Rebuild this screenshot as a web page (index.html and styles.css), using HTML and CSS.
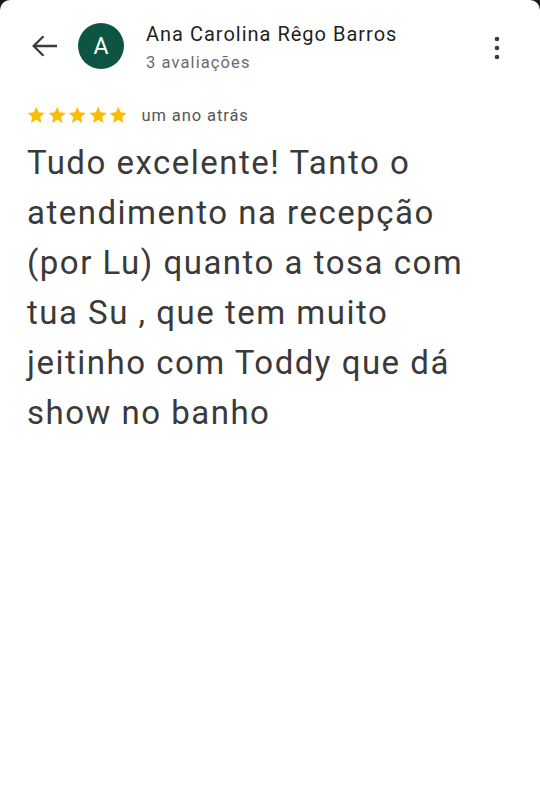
FILE: index.html
```html
<!DOCTYPE html>
<html lang="pt">
<head>
<meta charset="utf-8">
<link rel="stylesheet" href="styles.css">
</head>
<body>
<div class="screen">
  <header class="header">
    <svg class="back" viewBox="0 0 26 22" width="26" height="22"><path d="M1.5 11H25M11.5 1.2L1.6 11l9.9 9.8" fill="none" stroke="#3c3c3c" stroke-width="2.3"/></svg>
    <div class="avatar">A</div>
    <div class="who">
      <div class="name">Ana Carolina Rêgo Barros</div>
      <div class="count">3 avaliações</div>
    </div>
    <svg class="more" viewBox="0 0 24 24" width="24" height="24"><circle cx="12" cy="3" r="2.3" fill="#3c3c3c"/><circle cx="12" cy="12" r="2.3" fill="#3c3c3c"/><circle cx="12" cy="21" r="2.3" fill="#3c3c3c"/></svg>
  </header>
  <div class="meta">
    <div class="stars">
      <svg viewBox="0 0 24 24"><path d="M12 17.27L18.18 21l-1.64-7.03L22 9.24l-7.19-.61L12 2 9.19 8.63 2 9.24l5.46 4.73L5.82 21z" fill="#fbbc04"/></svg>
      <svg viewBox="0 0 24 24"><path d="M12 17.27L18.18 21l-1.64-7.03L22 9.24l-7.19-.61L12 2 9.19 8.63 2 9.24l5.46 4.73L5.82 21z" fill="#fbbc04"/></svg>
      <svg viewBox="0 0 24 24"><path d="M12 17.27L18.18 21l-1.64-7.03L22 9.24l-7.19-.61L12 2 9.19 8.63 2 9.24l5.46 4.73L5.82 21z" fill="#fbbc04"/></svg>
      <svg viewBox="0 0 24 24"><path d="M12 17.27L18.18 21l-1.64-7.03L22 9.24l-7.19-.61L12 2 9.19 8.63 2 9.24l5.46 4.73L5.82 21z" fill="#fbbc04"/></svg>
      <svg viewBox="0 0 24 24"><path d="M12 17.27L18.18 21l-1.64-7.03L22 9.24l-7.19-.61L12 2 9.19 8.63 2 9.24l5.46 4.73L5.82 21z" fill="#fbbc04"/></svg>
    </div>
    <span class="when">um ano atrás</span>
  </div>
  <p class="review">Tudo excelente! Tanto o atendimento na recepção (por Lu) quanto a tosa com tua Su , que tem muito jeitinho com Toddy que dá show no banho</p>
</div>
</body>
</html>
```

FILE: styles.css
```css
html, body {
  margin: 0;
  padding: 0;
  background: #1a1a1a;
}
body {
  font-family: Roboto, "Noto Sans", sans-serif;
}
.screen {
  width: 540px;
  height: 810px;
  background: #fff;
  border-radius: 10px 10px 0 0;
  box-sizing: border-box;
  padding: 22px 0 0 0;
  overflow: hidden;
}
.header {
  display: flex;
  align-items: flex-start;
  height: 50px;
}
.back {
  margin: 13px 0 0 32px;
  flex: none;
}
.avatar {
  flex: none;
  width: 46px;
  height: 46px;
  border-radius: 50%;
  background: #0d5543;
  color: #fff;
  font-size: 23px;
  display: flex;
  align-items: center;
  justify-content: center;
  margin: 1px 0 0 20px;
}
.who {
  margin-left: 22px;
  flex: 1;
}
.name {
  font-size: 20px;
  letter-spacing: 1px;
  color: #1f1f1f;
  line-height: 24px;
}
.count {
  font-size: 16.5px;
  letter-spacing: 1.1px;
  color: #6a6a6a;
  line-height: 20px;
  margin-top: 7px;
}
.more {
  flex: none;
  margin: 14px 31px 0 0;
}
.meta {
  display: flex;
  align-items: center;
  margin: 33px 0 0 26px;
}
.stars {
  display: flex;
}
.stars svg {
  width: 20.5px;
  height: 20.5px;
}
.when {
  margin-left: 13px;
  font-size: 16.5px;
  letter-spacing: 0.9px;
  color: #555;
}
.review {
  margin: 12px 40px 0 27px;
  font-size: 33px;
  letter-spacing: 1.5px;
  line-height: 50px;
  color: #3a3a3a;
}
```
